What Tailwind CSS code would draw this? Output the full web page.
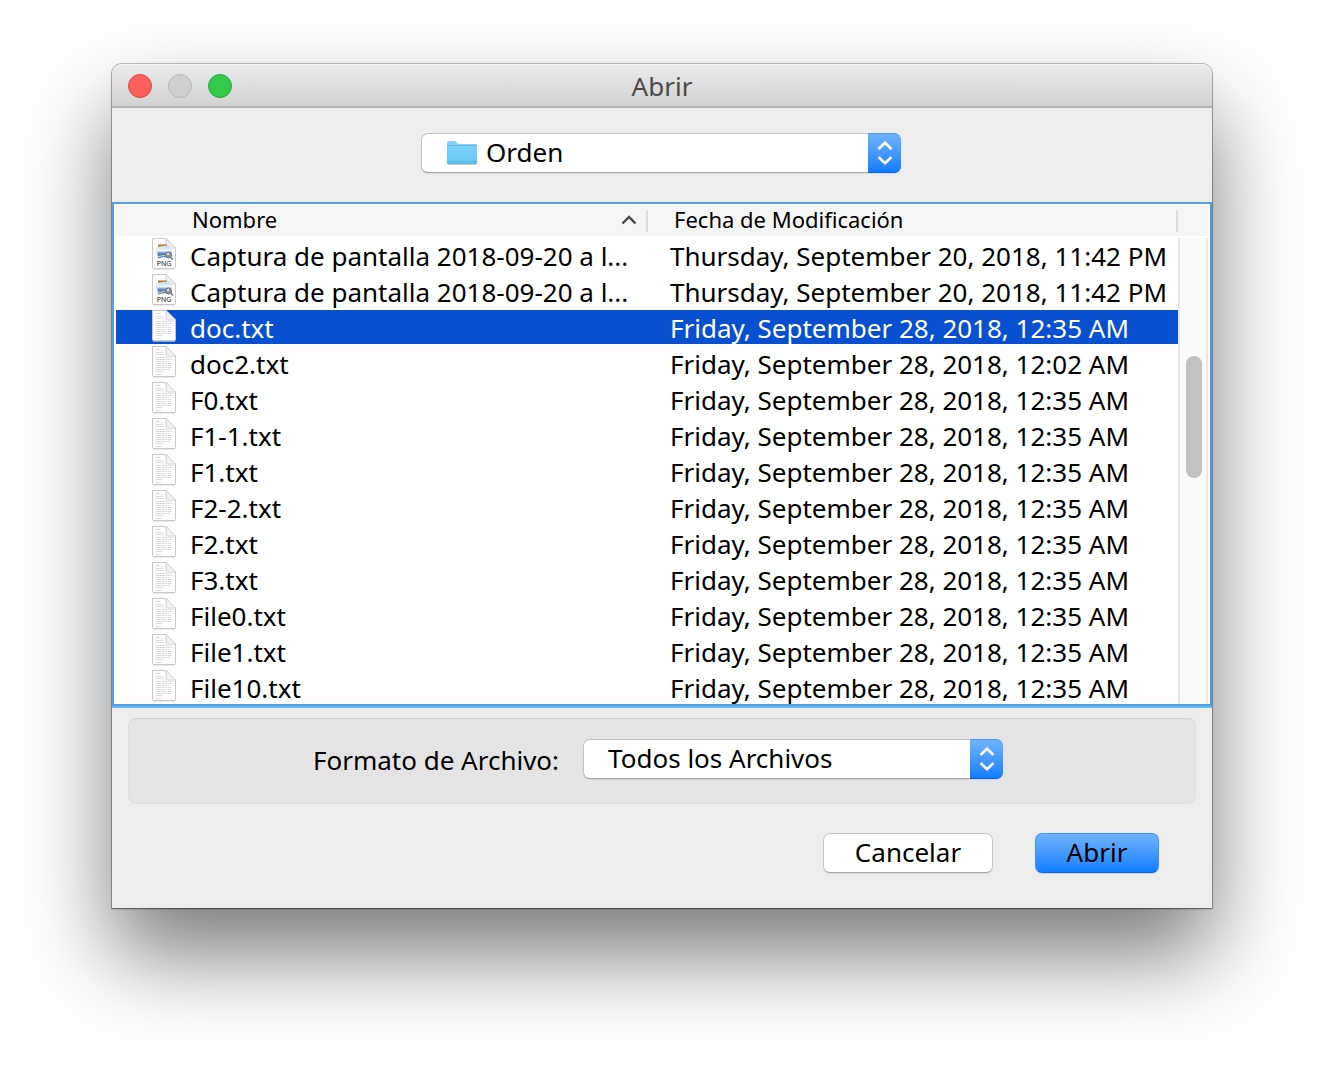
<!DOCTYPE html>
<html lang="es">
<head>
<meta charset="utf-8">
<meta name="viewport" content="width=device-width, initial-scale=1">
<title>Abrir</title>
<script src="https://cdn.jsdelivr.net/npm/@tailwindcss/browser@4"></script>
</head>
<body class="min-h-screen overflow-hidden bg-white px-28 pt-16 font-['Noto_Sans',sans-serif] text-black">

<svg class="absolute size-0" aria-hidden="true">
  <defs>
    <linearGradient id="folder-fill" x1="0" y1="0" x2="0" y2="1">
      <stop offset="0" stop-color="#7fd2f9"/><stop offset="1" stop-color="#66c7f4"/>
    </linearGradient>
    <linearGradient id="sky" x1="0" y1="0" x2="0" y2="1">
      <stop offset="0" stop-color="#b9d3ee"/><stop offset=".4" stop-color="#f3f6fa"/><stop offset=".6" stop-color="#5b8ac6"/><stop offset="1" stop-color="#3a68ac"/>
    </linearGradient>
    <symbol id="page" viewBox="0 0 26 32">
      <path d="M1.500 .5H15L24.500 10V29.500Q24.500 30.500 23.500 30.500H2.500Q1.500 30.500 1.500 29.500Z" fill="#fdfdfd" stroke="#c8c8c8"/>
      <path d="M2 31.500H24" stroke="#dedede" stroke-opacity=".6"/>
      <path d="M15 .5V8.500Q15 10 16.500 10H24.500Z" fill="#f1f1f1" stroke="#d2d2d2"/>
    </symbol>
    <symbol id="txt" viewBox="0 0 26 32">
      <use href="#page"/>
      <path d="M5 3.500H9M5 6.500H12M5 8.500H13M5 11.500H20M5 13.500H21M5 15.500H18M5 17.500H21M5 19.500H20M5 21.500H21M5 23.500H19M5 25.500H12M5 28.500H10" stroke="#dadada" stroke-dasharray="3 .5 2 .5"/>
    </symbol>
    <symbol id="png" viewBox="0 0 26 32">
      <use href="#page"/>
      <path d="M7 6.500h9v3H7z" fill="#a87b35"/>
      <path d="M5.500 9.500 19.500 7.500 21 18.500 6.500 20.500Z" fill="url(#sky)" stroke="#e3e9f0"/>
      <path d="M7 18.500 14 17.500 20 18.500" stroke="#e3d6b6" fill="none"/>
      <circle cx="17.500" cy="17" r="3" fill="#8d949c" stroke="#6b7076"/>
      <circle cx="17" cy="16" r="1.300" fill="#d9dde2"/>
      <path d="M20 19.500 22 21.500" stroke="#66707a" stroke-width="1.500"/>
      <text x="13" y="28" text-anchor="middle" font-family="Noto Sans, sans-serif" font-size="7" fill="#222">PNG</text>
    </symbol>
    <symbol id="steps" viewBox="0 0 16 24">
      <path d="M1.500 8 8 1.800 14.500 8M1.500 16 8 22.200 14.500 16" fill="none" stroke="#fff" stroke-width="2.600"/>
    </symbol>
  </defs>
</svg>

<main class="rounded-t-[10px] bg-[#ededed] shadow-[0_0_0_1px_rgba(0,0,0,0.24),0_47px_88px_rgba(0,0,0,0.52),0_1px_2px_rgba(0,0,0,0.4)]">
  <header class="grid h-11 grid-cols-[1fr_auto_1fr] items-center rounded-t-[10px] border-b-2 border-[#b4b4b4] bg-linear-to-b from-[#ebebeb] to-[#d2d2d2] px-4 pt-[2px] shadow-[inset_0_1px_0_#f6f6f6]">
    <div class="flex gap-4">
      <button type="button" aria-label="Cerrar" class="size-6 rounded-full border border-[#e0443e] bg-[#fc605c]"></button>
      <button type="button" aria-label="Minimizar" disabled class="size-6 rounded-full border border-[#b5b5b5] bg-[#d0d0d0]"></button>
      <button type="button" aria-label="Ampliar" class="size-6 rounded-full border border-[#24a83a] bg-[#34c84a]"></button>
    </div>
    <h1 class="text-[26px] leading-8 text-[#4a4a4a]">Abrir</h1>
  </header>

  <div class="flex h-[94px] items-start justify-center pt-[25px] pr-[2px]">
    <div class="relative w-[480px]">
      <select aria-label="Carpeta" class="h-10 w-full appearance-none rounded-[7px] border border-[#c2c2c2] border-b-[#a6a6a6] bg-white pb-[2px] pl-16 text-[26px] leading-8 shadow-[0_1px_1px_rgba(0,0,0,0.08)]"><option>Orden</option></select>
      <svg class="pointer-events-none absolute top-[7px] left-[25px] h-[26px] w-8" viewBox="0 0 32 26" aria-hidden="true">
        <path d="M2 24.500H30" stroke="#c9c9c9"/>
        <path d="M1 3Q1 1 3 1H8.500Q10 1 11 2.500T13.500 4H29.500Q31 4 31 5.500V22.500Q31 24 29.500 24H2.500Q1 24 1 22.500Z" fill="#86d2f7"/>
        <path d="M1 5.500H31V22.500Q31 24 29.500 24H2.500Q1 24 1 22.500Z" fill="url(#folder-fill)"/>
        <path d="M1 5.500H31M1 21.500H31M1.500 23.500H30.500" stroke="#51aedb" stroke-opacity=".7"/>
      </svg>
      <span class="pointer-events-none absolute top-0 right-0 flex h-10 w-[33px] items-center justify-center rounded-r-[7px] border-t border-b border-t-[#4d9cf0] border-b-[#0a5fff] bg-linear-to-b from-[#6db3fa] to-[#087dff]"><svg class="h-6 w-4" aria-hidden="true"><use href="#steps"/></svg></span>
    </div>
  </div>

  <section aria-label="Archivos" class="border-b-2 border-[#6bb9fd]">
    <div class="relative h-[504px] overflow-hidden border-2 border-[#539fe0] bg-white px-[2px] pt-[2px]">
      <table class="w-full table-fixed border-separate border-spacing-0 text-left text-[26px] whitespace-nowrap">
        <colgroup><col class="w-[532px]"><col><col class="w-[30px]"></colgroup>
        <thead class="text-[22px] [&_th]:h-8 [&_th]:border-b-2 [&_th]:border-white [&_th]:bg-[#f5f5f5] [&_th]:p-0 [&_th]:leading-7 [&_th]:font-normal">
          <tr>
            <th scope="col" aria-sort="ascending"><div class="flex h-[22px] items-center justify-between border-r-2 border-[#dcdcdc] pr-[9px] pb-1 pl-[76px]">Nombre<svg class="mt-[2px] h-[10px] w-4" viewBox="0 0 16 10" aria-hidden="true"><path d="M1.500 8.500 8 2 14.500 8.500" fill="none" stroke="#444" stroke-width="2.400"/></svg></div></th>
            <th scope="col"><div class="flex h-[22px] items-center border-r-2 border-[#dcdcdc] pb-1 pl-[26px]">Fecha de Modificación</div></th>
            <th aria-hidden="true"></th>
          </tr>
        </thead>
        <tbody class="[&_svg]:-mt-[3px] [&_svg]:h-8 [&_svg]:w-[26px] [&_svg]:shrink-0 [&_td]:h-9 [&_td]:overflow-hidden [&_td]:border-b-2 [&_td]:border-white [&_td]:p-0 [&_td]:pt-[3px] [&_td]:pl-[22px] [&_td]:leading-[31px] [&_td>div]:-ml-[22px] [&_td>div]:flex [&_td>div]:h-[31px] [&_td>div]:items-start [&_td>div]:gap-[13px] [&_td>div]:pl-[35px]">
          <tr><td><div><svg aria-hidden="true"><use href="#png"/></svg>Captura de pantalla 2018-09-20 a l...</div></td><td>Thursday, September 20, 2018, 11:42 PM</td></tr>
          <tr><td><div><svg aria-hidden="true"><use href="#png"/></svg>Captura de pantalla 2018-09-20 a l...</div></td><td>Thursday, September 20, 2018, 11:42 PM</td></tr>
          <tr aria-selected="true" class="text-white [&_td]:bg-[#0950d0]"><td><div><svg aria-hidden="true"><use href="#txt"/></svg>doc.txt</div></td><td>Friday, September 28, 2018, 12:35 AM</td></tr>
          <tr><td><div><svg aria-hidden="true"><use href="#txt"/></svg>doc2.txt</div></td><td>Friday, September 28, 2018, 12:02 AM</td></tr>
          <tr><td><div><svg aria-hidden="true"><use href="#txt"/></svg>F0.txt</div></td><td>Friday, September 28, 2018, 12:35 AM</td></tr>
          <tr><td><div><svg aria-hidden="true"><use href="#txt"/></svg>F1-1.txt</div></td><td>Friday, September 28, 2018, 12:35 AM</td></tr>
          <tr><td><div><svg aria-hidden="true"><use href="#txt"/></svg>F1.txt</div></td><td>Friday, September 28, 2018, 12:35 AM</td></tr>
          <tr><td><div><svg aria-hidden="true"><use href="#txt"/></svg>F2-2.txt</div></td><td>Friday, September 28, 2018, 12:35 AM</td></tr>
          <tr><td><div><svg aria-hidden="true"><use href="#txt"/></svg>F2.txt</div></td><td>Friday, September 28, 2018, 12:35 AM</td></tr>
          <tr><td><div><svg aria-hidden="true"><use href="#txt"/></svg>F3.txt</div></td><td>Friday, September 28, 2018, 12:35 AM</td></tr>
          <tr><td><div><svg aria-hidden="true"><use href="#txt"/></svg>File0.txt</div></td><td>Friday, September 28, 2018, 12:35 AM</td></tr>
          <tr><td><div><svg aria-hidden="true"><use href="#txt"/></svg>File1.txt</div></td><td>Friday, September 28, 2018, 12:35 AM</td></tr>
          <tr><td><div><svg aria-hidden="true"><use href="#txt"/></svg>File10.txt</div></td><td>Friday, September 28, 2018, 12:35 AM</td></tr>
        </tbody>
      </table>
      <div class="absolute top-[34px] right-[2px] bottom-0 w-[30px] border-x-2 border-[#e8e8e8] bg-[#fafafa]">
        <div class="mt-[118px] ml-[6px] h-[122px] w-4 rounded-full bg-[#c1c1c1]"></div>
      </div>
    </div>
  </section>

  <div class="px-4 pt-[10px]">
    <div class="flex h-[86px] items-center justify-center gap-6 rounded-lg border border-[#dedede] border-t-[#d3d3d3] bg-[#e4e4e4] pr-2 pb-1">
      <label for="format" class="pt-[2px] text-[26px] leading-8">Formato de Archivo:</label>
      <div class="relative w-[420px]">
        <select id="format" class="h-10 w-full appearance-none rounded-[7px] border border-[#c2c2c2] border-b-[#a6a6a6] bg-white pb-[2px] pl-6 text-[26px] leading-8 shadow-[0_1px_1px_rgba(0,0,0,0.08)]"><option>Todos los Archivos</option></select>
        <span class="pointer-events-none absolute top-0 right-0 flex h-10 w-[33px] items-center justify-center rounded-r-[7px] border-t border-b border-t-[#4d9cf0] border-b-[#0a5fff] bg-linear-to-b from-[#6db3fa] to-[#087dff]"><svg class="h-6 w-4" aria-hidden="true"><use href="#steps"/></svg></span>
      </div>
    </div>
  </div>

  <footer class="flex justify-end gap-[42px] pt-[29px] pr-[53px] pb-[35px] text-[26px] leading-8">
    <button type="button" class="h-10 w-[170px] rounded-[7px] border border-[#c6c6c6] border-b-[#a6a6a6] bg-white pb-[2px] shadow-[0_1px_1px_rgba(0,0,0,0.08)]">Cancelar</button>
    <button type="button" class="h-10 w-[124px] rounded-[7px] border border-[#3f93f5] border-b-[#0a5fff] bg-linear-to-b from-[#6db3fa] to-[#087dff] pb-[2px] shadow-[0_1px_1px_rgba(0,0,0,0.12)]">Abrir</button>
  </footer>
</main>
</body>
</html>
